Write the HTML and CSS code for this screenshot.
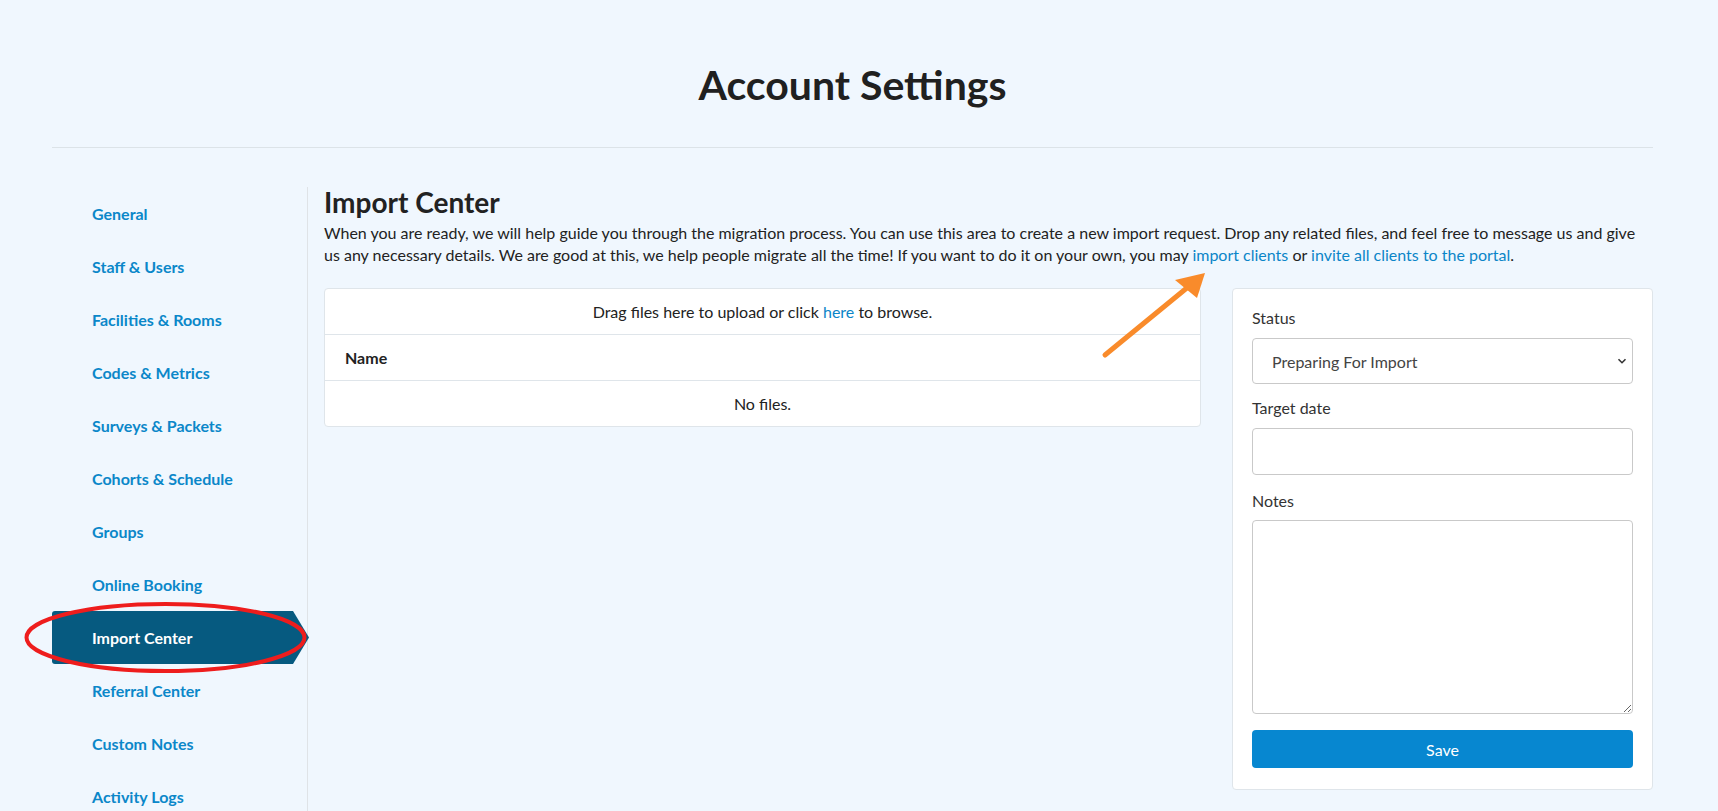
FILE: index.html
```html
<!DOCTYPE html>
<html lang="en">
<head>
    <meta charset="UTF-8">
    <meta name="viewport" content="width=device-width, initial-scale=1.0">
    <title>Account Settings</title>
    <link rel="stylesheet" href="styles.css">
</head>
<body>

    <div class="page">
        <header class="page-header">
            <h1>Account Settings</h1>
        </header>

        <div class="settings">
            <nav class="side-nav">
                <a href="#">General</a>
                <a href="#">Staff &amp; Users</a>
                <a href="#">Facilities &amp; Rooms</a>
                <a href="#">Codes &amp; Metrics</a>
                <a href="#">Surveys &amp; Packets</a>
                <a href="#">Cohorts &amp; Schedule</a>
                <a href="#">Groups</a>
                <a href="#">Online Booking</a>
                <a href="#" class="active">Import Center</a>
                <a href="#">Referral Center</a>
                <a href="#">Custom Notes</a>
                <a href="#">Activity Logs</a>
            </nav>

            <main class="content">
                <h2>Import Center</h2>
                <p class="intro">When you are ready, we will help guide you through the migration process. You can use this area to create a new import request. Drop any related files, and feel free to message us and give us any necessary details. We are good at this, we help people migrate all the time! If you want to do it on your own, you may <a href="#">import clients</a> or <a href="#">invite all clients to the portal</a>.</p>

                <div class="import-grid">
                    <div class="files-card">
                        <div class="drop-row">Drag files here to upload or click <a href="#">here</a> to browse.</div>
                        <div class="head-row">Name</div>
                        <div class="empty-row">No files.</div>
                    </div>

                    <form class="request-card">
                        <label for="status">Status</label>
                        <div class="select-wrap">
                            <select id="status">
                                <option>Preparing For Import</option>
                                <option>In Progress</option>
                                <option>Complete</option>
                            </select>
                            <svg class="chevron" width="10" height="10" viewBox="0 0 10 10"><path d="M1.5 3.2 L5 6.7 L8.5 3.2" fill="none" stroke="#333" stroke-width="1.6"/></svg>
                        </div>

                        <label for="target">Target date</label>
                        <input type="text" id="target">

                        <label for="notes" class="notes-label">Notes</label>
                        <textarea id="notes"></textarea>

                        <button type="button" class="save-btn">Save</button>
                    </form>
                </div>
            </main>
        </div>
    </div>

    <!-- annotation marks drawn over the screenshot -->
    <svg class="marks" width="1718" height="811" viewBox="0 0 1718 811">
        <ellipse cx="165.5" cy="637.5" rx="139" ry="33.5" fill="none" stroke="#ee1d1d" stroke-width="4"/>
        <line x1="1105" y1="355" x2="1188" y2="287" stroke="#f98b2b" stroke-width="5" stroke-linecap="round"/>
        <polygon points="1205,273 1175,280 1197,298" fill="#f98b2b"/>
    </svg>

</body>
</html>
```

FILE: styles.css
```css
html, body {
    margin: 0;
    padding: 0;
    height: 100%;
    overflow: hidden;
}

body {
    font-family: Lato, "Open Sans", sans-serif;
    font-size: 16px;
    color: #222;
    background-color: #f0f7fe;
    position: relative;
}

a {
    color: #0b85c8;
    text-decoration: none;
}

.page {
    padding: 0 65px 0 52px;
}

.page-header {
    padding-top: 60px;
    height: 87px;
    border-bottom: 1px solid #dce3e8;
}

.page-header h1 {
    margin: 0;
    text-align: center;
    font-size: 41px;
    line-height: 1.2;
    font-weight: 700;
    color: #202020;
}

.settings {
    display: grid;
    grid-template-columns: 256px 1fr;
    margin-top: 39px;
}

.side-nav {
    display: flex;
    flex-direction: column;
    border-right: 1px solid #dfe3e7;
    min-height: 640px;
}

.side-nav a {
    display: block;
    height: 53px;
    line-height: 53px;
    padding-left: 40px;
    font-weight: 700;
    font-size: 16px;
    color: #0b87c9;
}

.side-nav a.active {
    background-color: #065a80;
    color: white;
    margin-right: -2px;
    border-radius: 3px 0 0 3px;
    clip-path: polygon(0 0, calc(100% - 16px) 0, 100% 50%, calc(100% - 16px) 100%, 0 100%);
}

.content {
    padding-left: 16px;
    padding-top: 1px;
}

.content h2 {
    margin: 0;
    font-size: 28px;
    line-height: 1;
    font-weight: 700;
}

.intro {
    margin: 6px 0 0;
    line-height: 22px;
    color: #222;
}

.import-grid {
    display: grid;
    grid-template-columns: 1fr 421px;
    gap: 31px;
    align-items: start;
    margin-top: 22px;
}

.files-card {
    background: white;
    border: 1px solid #dfe5ea;
    border-radius: 4px;
}

.files-card > div {
    height: 45px;
    line-height: 45px;
    padding: 0 20px;
    color: #222;
}

.files-card > div + div {
    border-top: 1px solid #dfe5ea;
}

.drop-row, .empty-row {
    text-align: center;
}

.head-row {
    font-weight: 700;
}

.request-card {
    display: flex;
    flex-direction: column;
    background: white;
    border: 1px solid #dfe5ea;
    border-radius: 4px;
    padding: 18px 19px 21px;
}

.request-card label {
    line-height: 22px;
    color: #333;
    margin-bottom: 9px;
}

.request-card .notes-label {
    margin-bottom: 8px;
}

.select-wrap {
    position: relative;
    margin-bottom: 13px;
}

.request-card select,
.request-card input,
.request-card textarea {
    box-sizing: border-box;
    width: 100%;
    font-family: inherit;
    font-size: 16px;
    color: #444;
    background: white;
    border: 1px solid #c9c9c9;
    border-radius: 4px;
}

.request-card select {
    appearance: none;
    height: 46px;
    padding: 0 30px 0 19px;
    display: block;
}

.chevron {
    position: absolute;
    right: 6px;
    top: 18px;
    pointer-events: none;
}

.request-card input {
    height: 47px;
    padding: 0 12px;
    margin-bottom: 15px;
}

.request-card textarea {
    height: 194px;
    padding: 10px 12px;
    margin-bottom: 16px;
    display: block;
}

.save-btn {
    height: 38px;
    border: none;
    border-radius: 4px;
    background-color: #0787d0;
    color: white;
    font-family: inherit;
    font-size: 16px;
    cursor: pointer;
}

.marks {
    position: absolute;
    top: 0;
    left: 0;
    pointer-events: none;
}
```
